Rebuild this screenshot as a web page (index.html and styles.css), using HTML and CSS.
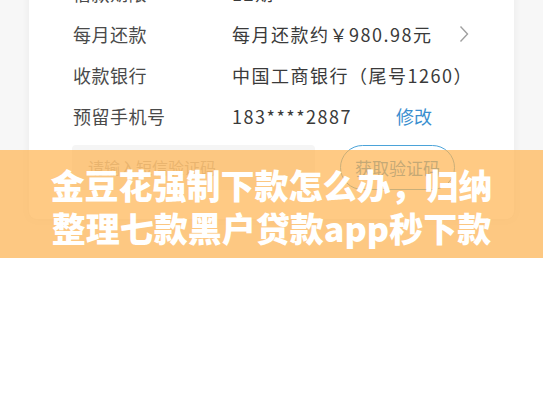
FILE: index.html
```html
<!DOCTYPE html>
<html lang="zh">
<head>
    <meta charset="UTF-8">
    <meta name="viewport" content="width=device-width, initial-scale=1.0">
    <title>金豆花强制下款怎么办</title>
    <link rel="stylesheet" href="styles.css">
</head>
<body>
    <div class="shot">
        <div class="card">
            <div class="row">
                <span class="label">借款期限</span>
                <span class="value">12期</span>
            </div>
            <div class="row">
                <span class="label">每月还款</span>
                <span class="value">每月还款约￥980.98元</span>
                <svg class="chevron" width="10" height="18" viewBox="0 0 10 18">
                    <path d="M1.5 1.5 L8.5 9 L1.5 16.5" fill="none" stroke="#a0a0a0" stroke-width="1.4"/>
                </svg>
            </div>
            <div class="row">
                <span class="label">收款银行</span>
                <span class="value">中国工商银行（尾号1260）</span>
            </div>
            <div class="row">
                <span class="label">预留手机号</span>
                <span class="value phone">183****2887</span>
                <span class="link">修改</span>
            </div>

            <div class="verify">
                <div class="code-input">请输入短信验证码</div>
                <button class="code-btn">获取验证码</button>
            </div>
        </div>

        <div class="banner">
            金豆花强制下款怎么办，归纳<br>
            整理七款黑户贷款app秒下款
        </div>
    </div>
</body>
</html>
```

FILE: styles.css
```css
body {
    margin: 0;
    padding: 0;
    background-color: #fff;
    font-family: "Noto Sans CJK SC", "Noto Sans", sans-serif;
}

.shot {
    position: relative;
    height: 258px;
    overflow: hidden;
    background-color: #f7f7f7;
}

.card {
    margin: -40px 29px 0 29px;
    padding: 12px 45px 29px 44px;
    background-color: #fff;
    border-radius: 8px;
    box-shadow: 0 0 8px rgba(0, 0, 0, 0.06);
}

.row {
    display: flex;
    align-items: center;
    height: 41px;
    font-size: 18px;
    color: #444;
}

.label {
    width: 159px;
    color: #4a4a4a;
    letter-spacing: 0.5px;
}

.value {
    flex: 1;
    color: #3a3a3a;
    letter-spacing: 1.5px;
}

.phone {
    flex: none;
    width: 164px;
}

.link {
    color: #3b8fcf;
}

.chevron {
    display: block;
}

.verify {
    display: flex;
    gap: 25px;
    margin-top: 9px;
}

.code-input {
    width: 227px;
    height: 45px;
    padding-left: 16px;
    line-height: 45px;
    margin-left: -1px;
    background-color: #f5f5f5;
    border-radius: 4px;
    font-size: 16px;
    color: #b5b5b5;
}

.code-btn {
    width: 115px;
    height: 45px;
    border: 1.5px solid #4ba3d9;
    border-radius: 23px;
    background: #fff;
    color: #3b8fcf;
    font-family: inherit;
    font-size: 17px;
    padding: 0;
}

/* оранжевая плашка с заголовком поверх скриншота */
.banner {
    position: absolute;
    left: 0;
    right: 0;
    top: 150px;
    height: 108px;
    box-sizing: border-box;
    padding-top: 13px;
    background-color: rgba(255, 180, 80, 0.7);
    color: #fff;
    font-size: 34px;
    font-weight: 900;
    line-height: 43px;
    text-align: center;
}
```
